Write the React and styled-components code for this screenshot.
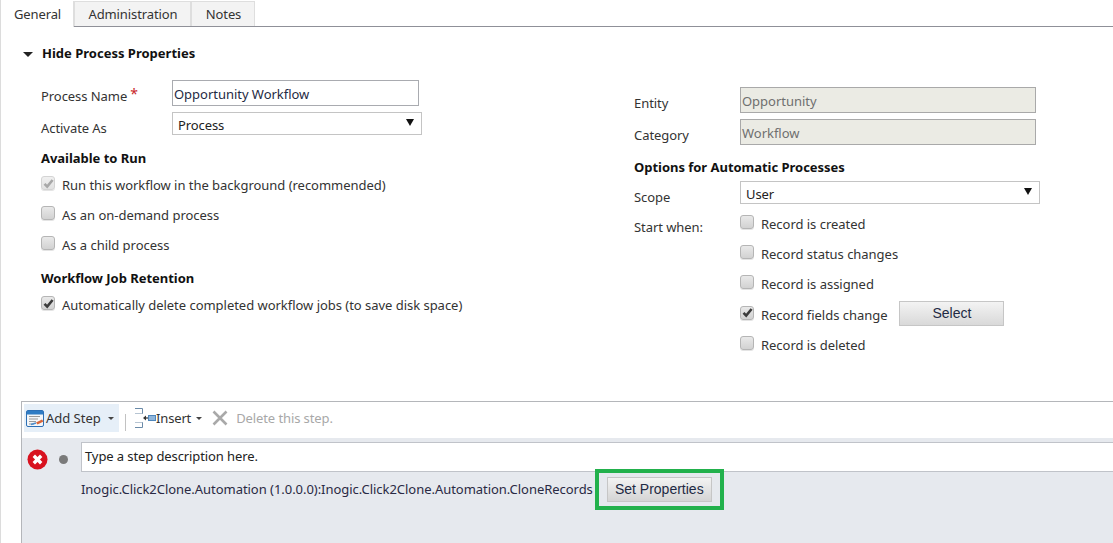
import React from "react";
import styled, { createGlobalStyle } from "styled-components";

const Global = createGlobalStyle`
  html, body { margin: 0; padding: 0; background: #fff; }
  body { font-family: "Noto Sans", "Open Sans", sans-serif; font-size: 13px; color: #333; }
  * { box-sizing: border-box; }
`;

const Page = styled.div`
  width: 1113px; height: 543px; overflow: hidden; display: flex; flex-direction: column;
  border-left: 1px solid #dcdcdc; background: #fff;
`;
const TabBar = styled.div`
  display: flex; height: 27px; padding-top: 1px; border-bottom: 1px solid #8f9098; flex: none;
`;
const Tab = styled.div`
  height: ${p => (p.$active ? "26px" : "25px")};
  width: ${p => p.$w}px; display: flex; align-items: center; justify-content: center;
  background: ${p => (p.$active ? "#fff" : "#f3f3f3")};
  border: 1px solid #dedede; border-bottom: none;
  border-left: ${p => (p.$active ? "none" : "1px solid #dedede")};
  border-top: ${p => (p.$active ? "none" : "1px solid #dedede")};
  color: #333; letter-spacing: -0.1px; padding-left: 1px;
`;
const Section = styled.div`
  flex: none; height: 374px; padding-left: 22px;
`;
const Disclosure = styled.div`
  display: flex; align-items: center; height: 20px; margin-top: 16px; font-weight: 700; color: #111; letter-spacing: 0;
  gap: 9px;
`;
const Caret = styled.span`
  width: 0; height: 0; border: 5px solid transparent; border-top: 5px solid #222; border-bottom: none; flex: none; margin-top: 3px;
`;
const Columns = styled.div`
  display: grid; grid-template-columns: 593px 1fr; margin-top: 17px; padding-left: 18px;
`;
const Col = styled.div` display: flex; flex-direction: column; padding-top: ${p => p.$top || 0}px; `;
const FieldRow = styled.div`
  display: grid; grid-template-columns: ${p => p.$label}px 1fr; height: ${p => p.$h}px; align-items: start;
`;
const Label = styled.div`
  color: #333; line-height: 18px; padding-top: ${p => p.$pt || 0}px; letter-spacing: -0.06px; white-space: nowrap;
`;
const Star = styled.span` color: #c8262a; margin-left: 3px; font-size: 14px; position: relative; top: -2px; `;
const TextInput = styled.div`
  width: ${p => p.$w}px; height: 26px; border: 1px solid ${p => (p.$disabled ? "#a9a9a9" : "#a9abb0")};
  background: ${p => (p.$disabled ? "#ebebe4" : "#fff")};
  color: ${p => (p.$disabled ? "#6f6f6f" : "#1f2a44")};
  padding-left: 1px; line-height: 26px; letter-spacing: -0.03px;
`;
const Select = styled.div`
  width: ${p => p.$w}px; height: 23px; border: 1px solid #c4c4c4; background: #fff; padding-top: 2px;
  display: flex; align-items: center; justify-content: space-between; padding-left: 5px; padding-right: 7px; color: #222; letter-spacing: -0.1px;
`;
const SelectArrow = styled.span`
  width: 0; height: 0; border-left: 4px solid transparent; border-right: 4px solid transparent; border-top: 7px solid #111; margin-top: -4px;
`;
const Heading = styled.div`
  font-weight: 700; color: #111; height: ${p => p.$h}px; line-height: 18px; padding-top: ${p => p.$pt || 0}px; letter-spacing: -0.03px; white-space: nowrap;
`;
const CheckRow = styled.div`
  display: flex; align-items: center; height: ${p => p.$h || 30}px; gap: 7px; color: #333; letter-spacing: -0.03px; white-space: nowrap;
`;
const Box = styled.span`
  width: 14px; height: 14px; border-radius: 3px; flex: none; border: 1px solid ${p => (p.$dim ? "#d4d4d4" : "#b5b5b5")};
  background: ${p => (p.$dim ? "linear-gradient(#f0f0f0,#e2e2e2)" : "linear-gradient(#e9e9e9,#d2d2d2)")};
  box-shadow: 0 1px 0 #e4e4e4; display: flex; align-items: center; justify-content: center; margin-top: -4px;
`;
const SelectButton = styled.div`
  margin-left: 5px; width: 105px; height: 25px; border: 1px solid #c6c6c6; display: flex; align-items: center; justify-content: center;
  background: linear-gradient(#f3f3f3,#d9d9d9); color: #1f2a44; font-family: "Liberation Sans", sans-serif; font-size: 14px; margin-top: -3px; letter-spacing: 0;
`;
const RightChecks = styled.div` margin-top: -5px; `;
const Panel = styled.div`
  flex: 1; margin-left: 20px; border: 1px solid #b4b6ba; border-right: none; border-bottom: none; display: flex; flex-direction: column; min-height: 0;
`;
const Toolbar = styled.div`
  height: 36px; flex: none; display: flex; align-items: flex-start; padding: 2px 0 0 2px; background: #fff;
`;
const AddStep = styled.div`
  width: 95px; height: 28px; background: #e6eff8; display: flex; align-items: center; padding-left: 2px; gap: 2px; color: #333; letter-spacing: -0.02px;
`;
const Sep = styled.span` width: 1px; height: 17px; background: #c2c2c2; margin: 10px 9px 0 6px; `;
const ToolItem = styled.div`
  height: 28px; display: flex; align-items: center; color: #333; margin-left: ${p => p.$ml || 0}px; letter-spacing: -0.15px;
`;
const MiniCaret = styled.span`
  width: 0; height: 0; border-left: 3.5px solid transparent; border-right: 3.5px solid transparent; border-top: 3.5px solid #444; margin-left: 5px;
`;
const DeleteText = styled.span` color: #a8a8a8; margin-left: 8px; letter-spacing: -0.1px; `;
const Body = styled.div`
  flex: 1; background: #e6e9ee; padding: 4px 0 0 0; display: grid; grid-template-columns: 59px 1fr;
`;
const StatusIcons = styled.div`
  display: flex; align-items: center; gap: 11px; height: 30px; padding: 4px 0 0 5px; align-self: start;
`;
const Dot = styled.span` width: 9px; height: 9px; border-radius: 50%; background: #7a7a7a; `;
const StepColumn = styled.div` display: flex; flex-direction: column; `;
const StepInput = styled.div`
  height: 30px; background: #fff; border: 1px solid #c0c3c9; border-right: none; padding-left: 3px; line-height: 27px; color: #222; letter-spacing: -0.1px;
`;
const StepLine = styled.div`
  display: flex; align-items: center; margin-top: 5px; height: 25px; color: #2a2a44; white-space: nowrap;
`;
const StepText = styled.span` letter-spacing: -0.04px; margin-top: -2px; `;
const PropsButton = styled.div`
  position: relative; margin-left: 14px; width: 105px; height: 25px; border: 1px solid #c6c6c6; flex: none; padding-bottom: 2px;
  display: flex; align-items: center; justify-content: center; background: linear-gradient(#f3f3f3,#d4d4d4);
  color: #1f2a44; font-family: "Liberation Sans", sans-serif; font-size: 14px;
`;
const Highlight = styled.span`
  position: absolute; inset: -9px -13px; border: 4px solid #22b14c;
`;

const Check = ({ dim }) => (
  <svg width="11" height="11" viewBox="0 0 11 11">
    <path d="M1.5 5.8 L4.2 8.6 L9.6 2" fill="none" stroke={dim ? "#a8a8a8" : "#3c3c3c"} strokeWidth="2.6" />
  </svg>
);
const CheckBox = ({ checked, dim }) => <Box $dim={dim}>{checked && <Check dim={dim} />}</Box>;

const IconSvg = styled.svg` flex: none; `;

const AddIcon = () => (
  <IconSvg width="18" height="17" viewBox="0 0 18 17">
    <rect x="0.5" y="0.5" width="17" height="16" rx="1.5" fill="#f4f6f9" stroke="#2c6fb5" />
    <rect x="1" y="1" width="16" height="3.5" fill="#2f7cc4" />
    <path d="M3 6.5h11M3 9h9M3 11.5h7M3 14h5" stroke="#9a9a9a" strokeWidth="1" />
    <path d="M10 12.5 L16 9.5 L17.5 11.5 L11.5 14.5Z" fill="#d8663a" />
    <path d="M5 14.5 L10 13" stroke="#4a8ccc" strokeWidth="1.4" />
  </IconSvg>
);
const InsertIcon = () => (
  <IconSvg width="21" height="20" viewBox="0 0 21 20">
    <path d="M0 0.5H7.5V6M0 19.5H7.5V14" fill="none" stroke="#6a8aa8" strokeWidth="1" />
    <path d="M0 5.5H7.5M0 14.5H7.5" stroke="#b6c4d2" strokeWidth="1" />
    <path d="M10 10H13" stroke="#333" strokeWidth="1.2" />
    <path d="M11 7.5 L8 10 L11 12.5Z" fill="#333" />
    <rect x="13.5" y="7.5" width="7" height="5" fill="#8fb6dc" stroke="#4e86bb" />
  </IconSvg>
);
const DeleteIcon = () => (
  <IconSvg width="16" height="16" viewBox="0 0 16 16">
    <path d="M1.5 1.5 L14.5 14.5 M14.5 1.5 L1.5 14.5" stroke="#a9a9a9" strokeWidth="2.6" />
  </IconSvg>
);
const ErrorIcon = () => (
  <IconSvg width="21" height="21" viewBox="0 0 21 21">
    <circle cx="10.5" cy="10.5" r="10" fill="#d8121f" />
    <path d="M6.8 6.8 L14.2 14.2 M14.2 6.8 L6.8 14.2" stroke="#fff" strokeWidth="3.4" />
  </IconSvg>
);

export default function App() {
  return (
    <Page>
      <Global />
      <TabBar>
        <Tab $active $w={73}>General</Tab>
        <Tab $w={117}>Administration</Tab>
        <Tab $w={64}>Notes</Tab>
      </TabBar>
      <Section>
        <Disclosure><Caret />Hide Process Properties</Disclosure>
        <Columns>
          <Col>
            <FieldRow $label={131} $h={32}>
              <Label $pt={7}>Process Name<Star>*</Star></Label>
              <TextInput $w={247}>Opportunity Workflow</TextInput>
            </FieldRow>
            <FieldRow $label={131} $h={36}>
              <Label $pt={7}>Activate As</Label>
              <Select $w={250}>Process<SelectArrow /></Select>
            </FieldRow>
            <Heading $h={22} $pt={1}>Available to Run</Heading>
            <CheckRow><CheckBox checked dim />Run this workflow in the background (recommended)</CheckRow>
            <CheckRow><CheckBox />As an on-demand process</CheckRow>
            <CheckRow><CheckBox />As a child process</CheckRow>
            <Heading $h={30} $pt={9}>Workflow Job Retention</Heading>
            <CheckRow><CheckBox checked />Automatically delete completed workflow jobs (to save disk space)</CheckRow>
          </Col>
          <Col $top={7}>
            <FieldRow $label={106} $h={32}>
              <Label $pt={7}>Entity</Label>
              <TextInput $w={296} $disabled>Opportunity</TextInput>
            </FieldRow>
            <FieldRow $label={106} $h={39}>
              <Label $pt={7}>Category</Label>
              <TextInput $w={296} $disabled>Workflow</TextInput>
            </FieldRow>
            <Heading $h={23}>Options for Automatic Processes</Heading>
            <FieldRow $label={106} $h={33}>
              <Label $pt={7}>Scope</Label>
              <Select $w={300}>User<SelectArrow /></Select>
            </FieldRow>
            <FieldRow $label={106} $h={150}>
              <Label $pt={4}>Start when:</Label>
              <RightChecks>
                <CheckRow><CheckBox />Record is created</CheckRow>
                <CheckRow><CheckBox />Record status changes</CheckRow>
                <CheckRow><CheckBox />Record is assigned</CheckRow>
                <CheckRow $h={31}><CheckBox checked />Record fields change<SelectButton>Select</SelectButton></CheckRow>
                <CheckRow><CheckBox />Record is deleted</CheckRow>
              </RightChecks>
            </FieldRow>
          </Col>
        </Columns>
      </Section>
      <Panel>
        <Toolbar>
          <AddStep><AddIcon />Add Step<MiniCaret /></AddStep>
          <Sep />
          <ToolItem><InsertIcon />Insert<MiniCaret /></ToolItem>
          <ToolItem $ml={10}><DeleteIcon /><DeleteText>Delete this step.</DeleteText></ToolItem>
        </Toolbar>
        <Body>
          <StatusIcons><ErrorIcon /><Dot /></StatusIcons>
          <StepColumn>
            <StepInput>Type a step description here.</StepInput>
            <StepLine>
              <StepText>Inogic.Click2Clone.Automation (1.0.0.0):Inogic.Click2Clone.Automation.CloneRecords</StepText>
              <PropsButton>Set Properties<Highlight /></PropsButton>
            </StepLine>
          </StepColumn>
        </Body>
      </Panel>
    </Page>
  );
}
